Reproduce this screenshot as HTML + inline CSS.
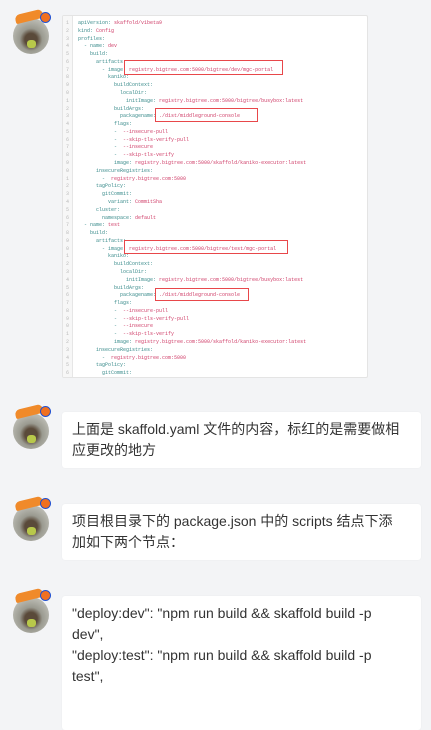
<!DOCTYPE html>
<html><head><meta charset="utf-8"><style>
body{margin:0;width:431px;height:693px;background:#f3f4f6;overflow:hidden;position:relative;font-family:"Liberation Sans","Noto Sans CJK SC",sans-serif}
.av{position:absolute;left:13px;width:36px;height:36px;border-radius:50%;background:radial-gradient(circle at 50% 60%,#5a4a3a 0 22%,#9a9a90 40%,#b8b8b0 70%)}
.av:after{content:"";position:absolute;left:14px;top:22px;width:9px;height:8px;background:#b8c84a;border-radius:40%}
.bd{position:absolute;left:15px;width:28px;height:9px;background:#f08a2a;border-radius:5px 5px 2px 2px;transform:rotate(-14deg)}
.bd2{position:absolute;left:40px;width:9px;height:9px;border-radius:50%;background:#f07020;border:1px solid #2050d0}
.code{position:absolute;left:62px;top:15px;width:304px;height:361px;background:#fff;border:1px solid #e4e4e4;border-radius:2px;overflow:hidden}
.gut{position:absolute;left:0;top:0;width:9px;height:100%;background:#f7f7f7;border-right:1px solid #e6e6e6}
.ln{position:absolute;left:0;height:8px;font:5px/8px "Liberation Mono",monospace;white-space:pre;width:300px}
.ln i{font-style:normal;color:#bbb;display:inline-block;width:9px;text-align:center}
.k{color:#3b8c8c}.v{color:#d0406a}
.box{position:absolute;border:1.5px solid #e8474a}
.bub{position:absolute;left:62px;width:339px;background:#fff;border-radius:3px;padding:7px 10px;font-size:14px;line-height:21px;color:#333;white-space:nowrap;box-shadow:0 0 1px rgba(0,0,0,.08)}
</style></head><body>
<div class="av" style="top:18px"></div><div class="bd" style="top:12px"></div><div class="bd2" style="top:12px"></div>
<div class="code"><div class="gut"></div>
<div id="c"></div>
<div class="box" style="left:61px;top:44px;width:157px;height:13px"></div>
<div class="box" style="left:92px;top:92px;width:101px;height:12px"></div>
<div class="box" style="left:61px;top:224px;width:162px;height:12px"></div>
<div class="box" style="left:92px;top:272px;width:92px;height:11px"></div>
</div>
<script>
var L=[[0,"apiVersion:","skaffold/v1beta9"],[0,"kind:","Config"],[0,"profiles:",""],[1,"- name:","dev"],[2,"build:",""],[3,"artifacts:",""],[4,"- image:","registry.bigtree.com:5000/bigtree/dev/mgc-portal"],[5,"kaniko:",""],[6,"buildContext:",""],[7,"localDir:",""],[8,"initImage:","registry.bigtree.com:5000/bigtree/busybox:latest"],[6,"buildArgs:",""],[7,"packagename:","./dist/middleground-console"],[6,"flags:",""],[6,"- ","--insecure-pull"],[6,"- ","--skip-tls-verify-pull"],[6,"- ","--insecure"],[6,"- ","--skip-tls-verify"],[6,"image:","registry.bigtree.com:5000/skaffold/kaniko-executor:latest"],[3,"insecureRegistries:",""],[4,"- ","registry.bigtree.com:5000"],[3,"tagPolicy:",""],[4,"gitCommit:",""],[5,"variant:","CommitSha"],[3,"cluster:",""],[4,"namespace:","default"],[1,"- name:","test"],[2,"build:",""],[3,"artifacts:",""],[4,"- image:","registry.bigtree.com:5000/bigtree/test/mgc-portal"],[5,"kaniko:",""],[6,"buildContext:",""],[7,"localDir:",""],[8,"initImage:","registry.bigtree.com:5000/bigtree/busybox:latest"],[6,"buildArgs:",""],[7,"packagename:","./dist/middleground-console"],[6,"flags:",""],[6,"- ","--insecure-pull"],[6,"- ","--skip-tls-verify-pull"],[6,"- ","--insecure"],[6,"- ","--skip-tls-verify"],[6,"image:","registry.bigtree.com:5000/skaffold/kaniko-executor:latest"],[3,"insecureRegistries:",""],[4,"- ","registry.bigtree.com:5000"],[3,"tagPolicy:",""],[4,"gitCommit:",""]];
var h="";L.forEach(function(l,i){h+='<div class="ln" style="top:'+(3+i*7.78)+'px"><i>'+((i+1)%10)+'</i>  '+"  ".repeat(l[0])+'<span class="k">'+l[1]+'</span> <span class="v">'+l[2]+'</span></div>'});
document.getElementById("c").innerHTML=h;
</script>
<div class="av" style="top:413px"></div><div class="bd" style="top:407px"></div><div class="bd2" style="top:406px"></div>
<div class="bub" style="top:412px;height:42px">上面是 skaffold.yaml 文件的内容，标红的是需要做相<br>应更改的地方</div>
<div class="av" style="top:505px"></div><div class="bd" style="top:499px"></div><div class="bd2" style="top:498px"></div>
<div class="bub" style="top:504px;height:42px">项目根目录下的 package.json 中的 scripts 结点下添<br>加如下两个节点：</div>
<div class="av" style="top:597px"></div><div class="bd" style="top:591px"></div><div class="bd2" style="top:590px"></div>
<div class="bub" style="top:596px;height:120px">"deploy:dev": "npm run build &amp;&amp; skaffold build -p<br>dev",<br>"deploy:test": "npm run build &amp;&amp; skaffold build -p<br>test",</div>
</body></html>
